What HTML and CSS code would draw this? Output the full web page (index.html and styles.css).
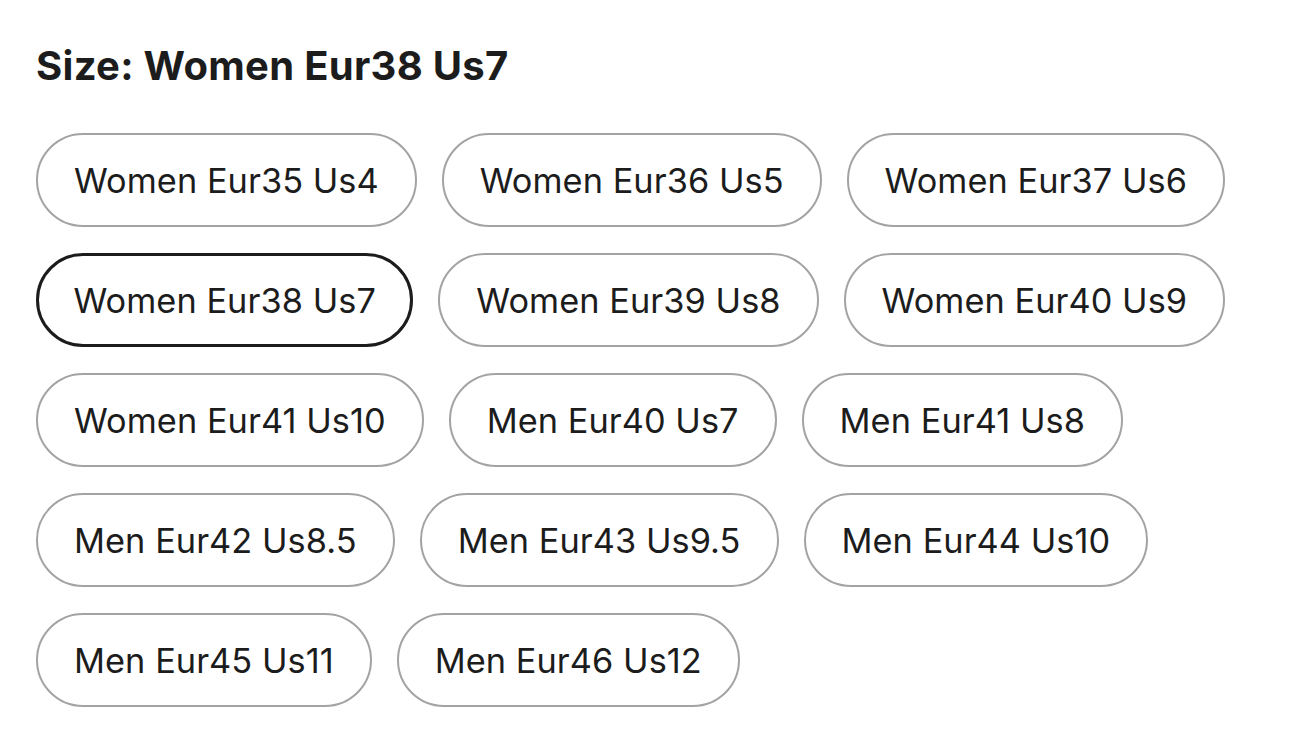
FILE: index.html
```html
<!DOCTYPE html>
<html>
<head>
<meta charset="utf-8">
<link rel="stylesheet" href="styles.css">
</head>
<body>
<div class="page">
  <h2 class="title">Size: Women Eur38 Us7</h2>
  <div class="sizes">
    <button class="size">Women Eur35 Us4</button>
    <button class="size">Women Eur36 Us5</button>
    <button class="size">Women Eur37 Us6</button>
    <button class="size selected">Women Eur38 Us7</button>
    <button class="size">Women Eur39 Us8</button>
    <button class="size">Women Eur40 Us9</button>
    <button class="size">Women Eur41 Us10</button>
    <button class="size">Men Eur40 Us7</button>
    <button class="size">Men Eur41 Us8</button>
    <button class="size">Men Eur42 Us8.5</button>
    <button class="size">Men Eur43 Us9.5</button>
    <button class="size">Men Eur44 Us10</button>
    <button class="size">Men Eur45 Us11</button>
    <button class="size">Men Eur46 Us12</button>
  </div>
</div>
</body>
</html>
```
FILE: styles.css
```css
html, body {
  margin: 0;
  padding: 0;
  background: #fff;
}
body {
  font-family: Inter, "Noto Sans", sans-serif;
  color: #1c1c1c;
}
.page {
  padding: 40px 36px 0 36px;
  width: 1218px;
}
.title {
  margin: 0;
  font-size: 40px;
  line-height: 52px;
  font-weight: 700;
  letter-spacing: 0.3px;
}
.sizes {
  margin-top: 41px;
  display: flex;
  flex-wrap: wrap;
  column-gap: 25px;
  row-gap: 26px;
}
.size {
  height: 94px;
  box-sizing: border-box;
  padding: 0 36px;
  border: 2px solid #a3a3a3;
  border-radius: 47px;
  background: #fff;
  font-family: Inter, "Noto Sans", sans-serif;
  font-size: 34.3px;
  letter-spacing: 0.06px;
  font-weight: 400;
  color: #1c1c1c;
  display: flex;
  align-items: center;
  white-space: nowrap;
}
.size.selected {
  border: 3.5px solid #1c1c1c;
  padding: 0 34.5px;
}
```
